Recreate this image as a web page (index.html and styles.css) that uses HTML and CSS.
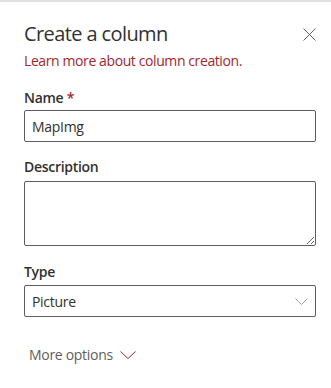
FILE: index.html
```html
<!DOCTYPE html>
<html lang="en">
  <head>
    <meta charset="UTF-8" />
    <title>Create a column</title>
    <link rel="stylesheet" href="styles.css">
  </head>
  <body>
    <div class="panel">
      <div class="header">
        <h1 class="title">Create a column</h1>
        <button class="close" aria-label="Close">
          <svg width="13" height="13" viewBox="0 0 13 13">
            <path d="M0.5 0.5 L12.5 12.5 M12.5 0.5 L0.5 12.5" stroke="#605e5c" stroke-width="1" fill="none" />
          </svg>
        </button>
      </div>
      <a class="learn" href="#">Learn more about column creation.</a>

      <div class="field field-name">
        <label class="label">Name <span class="req">*</span></label>
        <input class="textbox" type="text" value="MapImg" />
      </div>

      <div class="field field-desc">
        <label class="label">Description</label>
        <textarea class="textarea"></textarea>
      </div>

      <div class="field field-type">
        <label class="label">Type</label>
        <div class="select">
          <span>Picture</span>
          <svg width="13" height="7" viewBox="0 0 13 7">
            <path d="M0.5 0.5 L6.5 6.5 L12.5 0.5" stroke="#a19f9d" stroke-width="1" fill="none" />
          </svg>
        </div>
      </div>

      <button class="more">
        More options
        <svg width="16" height="8" viewBox="0 0 16 8">
          <path d="M0.5 0.5 L8 7.5 L15.5 0.5" stroke="#a4262c" stroke-width="1" fill="none" />
        </svg>
      </button>
    </div>
  </body>
</html>
```

FILE: styles.css
```css
body {
  margin: 0;
  background: #fff;
  font-family: "Open Sans", "Noto Sans", sans-serif;
  color: #323130;
}
.panel {
  border-top: 2px solid #e1dfdd;
  padding: 18px 15px 0 24px;
}
.header {
  display: flex;
  justify-content: space-between;
  align-items: center;
}
.title {
  margin: 0;
  font-size: 20px;
  font-weight: 500;
  line-height: 28px;
  color: #323130;
  letter-spacing: -0.6px;
}
.close {
  border: none;
  background: none;
  padding: 0;
  width: 13px;
  height: 13px;
  margin-top: 1px;
  display: flex;
}
.learn {
  display: block;
  margin-top: 3px;
  font-size: 14px;
  line-height: 20px;
  color: #a4262c;
  text-decoration: none;
  letter-spacing: -0.4px;
}
.label {
  display: block;
  font-size: 14px;
  font-weight: 600;
  line-height: 20px;
  letter-spacing: -0.3px;
}
.field-name {
  margin-top: 17px;
}
.field-name .label {
  margin-bottom: 2px;
}
.field-desc {
  margin-top: 15px;
}
.field-desc .label {
  margin-bottom: 4px;
}
.field-type {
  margin-top: 16px;
}
.field-type .label {
  margin-bottom: 3px;
}
.req {
  color: #a4262c;
}
.textbox,
.select {
  display: block;
  box-sizing: border-box;
  width: 100%;
  height: 32px;
  margin: 0;
  border: 1px solid #605e5c;
  border-radius: 2px;
  font-family: inherit;
  font-size: 14px;
  color: #323130;
  padding: 0 7px;
  letter-spacing: -0.3px;
}
.textarea {
  display: block;
  box-sizing: border-box;
  width: 100%;
  height: 65px;
  border: 1px solid #605e5c;
  border-radius: 2px;
  margin: 0;
}
.select {
  display: flex;
  align-items: center;
  justify-content: space-between;
}
.more {
  margin-top: 28px;
  display: flex;
  align-items: center;
  gap: 7px;
  border: none;
  background: none;
  padding: 0 4px 0 5px;
  font-family: inherit;
  font-size: 14px;
  line-height: 20px;
  color: #605e5c;
  letter-spacing: -0.3px;
}
```
